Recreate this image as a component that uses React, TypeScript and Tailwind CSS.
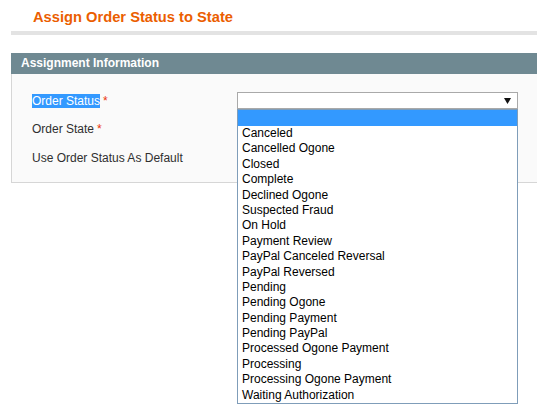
const statuses = [
  "Canceled",
  "Cancelled Ogone",
  "Closed",
  "Complete",
  "Declined Ogone",
  "Suspected Fraud",
  "On Hold",
  "Payment Review",
  "PayPal Canceled Reversal",
  "PayPal Reversed",
  "Pending",
  "Pending Ogone",
  "Pending Payment",
  "Pending PayPal",
  "Processed Ogone Payment",
  "Processing",
  "Processing Ogone Payment",
  "Waiting Authorization",
];

function Required() {
  return <span className="ml-[3px] text-[#eb340a]">*</span>;
}

export default function App() {
  return (
    <div className="relative h-[409px] w-[537px] overflow-hidden bg-white font-['Liberation_Sans',Arial,sans-serif] text-[12px] text-[#2f2f2f]">
      {/* page title */}
      <div className="ml-[11px] h-[31px] pl-[22px] pt-[8px] text-[14.7px] font-bold leading-[18px] text-[#eb5e00]">
        Assign Order Status to State
      </div>
      <div className="ml-[11px] h-[4px] bg-[#e3e3e3]" />

      {/* fieldset */}
      <div className="ml-[11px] mt-[18px] w-[600px]">
        <div className="h-[21px] bg-[#6f8992] pl-[10px] text-[12px] font-bold leading-[21px] text-white">
          Assignment Information
        </div>
        <div className="h-[109px] border border-t-0 border-[#d6d6d6] bg-[#fafafa] pl-[20px] pt-[18px]">
          <div className="flex flex-col gap-[11.5px]">
            <div className="flex h-[17px] items-center">
              <div className="w-[205px]">
                <span className="bg-[#3399ff] leading-[14px] text-white">Order Status</span>
                <Required />
              </div>
              <div className="relative h-[17px] w-[281px] border border-[#a9a9a9] bg-white">
                <svg className="absolute right-[6px] top-[5px]" width="7" height="6" viewBox="0 0 7 6">
                  <path d="M0 0h7L3.5 6z" fill="#111" />
                </svg>
                {/* open option list */}
                <div className="absolute left-[-1px] top-[16px] z-10 w-[281px] border border-[#7f9db9] bg-white text-black">
                  <div className="h-[16px] bg-[#3399ff]" />
                  {statuses.map((s) => (
                    <div key={s} className="h-[15.4px] pl-[4px] leading-[15.4px]">
                      {s}
                    </div>
                  ))}
                </div>
              </div>
            </div>
            <div className="flex h-[17px] items-center">
              <div className="w-[205px]">
                Order State
                <Required />
              </div>
            </div>
            <div className="flex h-[17px] items-center">
              <div className="w-[205px]">Use Order Status As Default</div>
            </div>
          </div>
        </div>
      </div>
    </div>
  );
}
